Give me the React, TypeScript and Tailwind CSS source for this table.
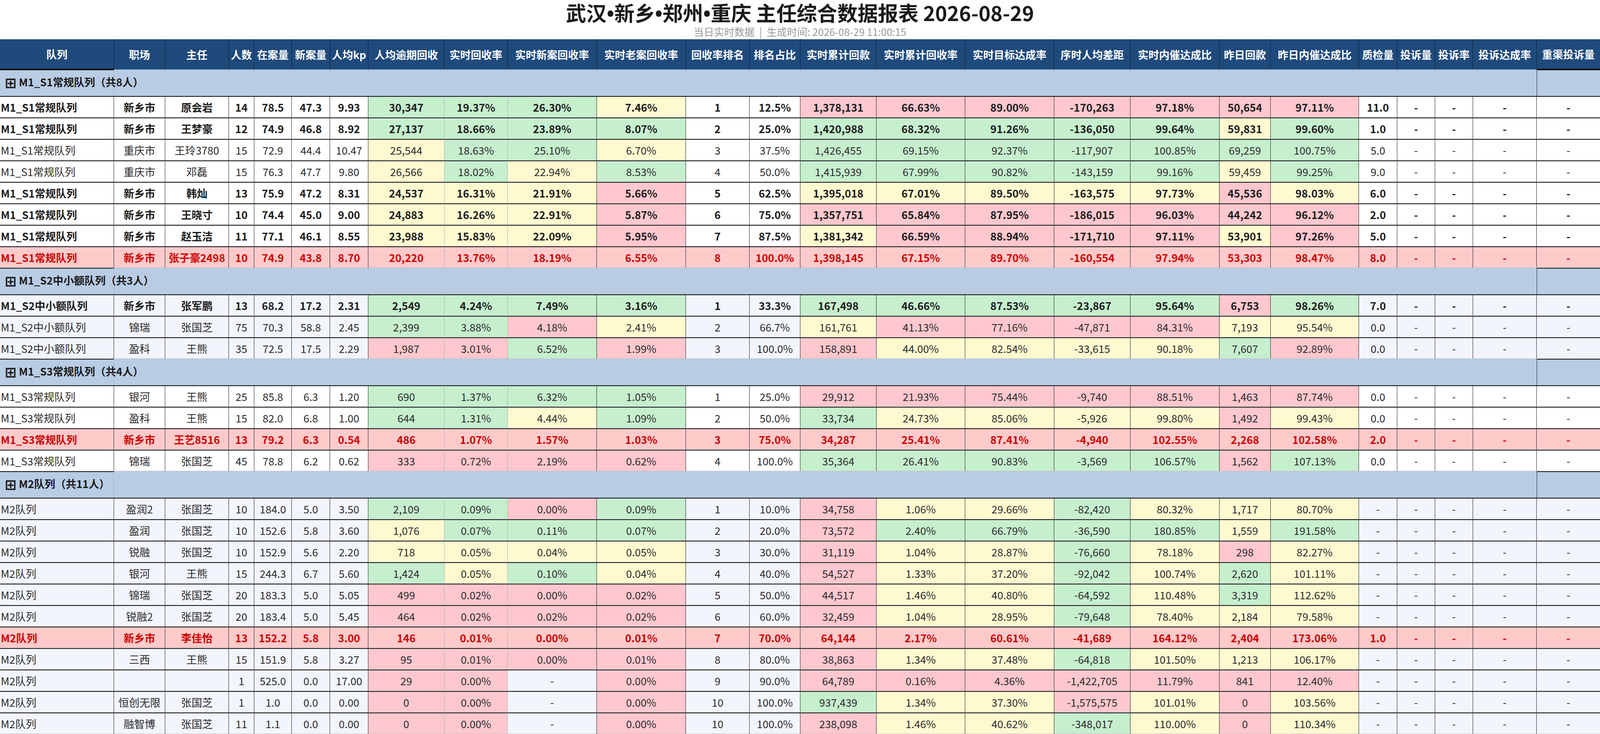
import * as React from 'react'

// -----------------------------------------------------------------------
// Data
// -----------------------------------------------------------------------

type Row = {
  team: string
  site: string
  lead: string
  /** 人数 .. 重渠投诉量, 22 values */
  vals: string[]
  /** fill codes for the 11 conditional columns: G / P / Y / . */
  fills: string
  bold?: boolean
  hl?: boolean
}

type Group = { title: string; light: boolean; rows: Row[] }

const WIDTHS = [292, 131, 163, 65, 96, 98, 98, 195, 162, 228, 228, 163, 130, 195, 227, 228, 195, 228, 131, 226, 98, 97, 97, 163, 162]

const HEADERS = [
  '队列', '职场', '主任', '人数', '在案量', '新案量', '人均kp', '人均逾期回收', '实时回收率',
  '实时新案回收率', '实时老案回收率', '回收率排名', '排名占比', '实时累计回款', '实时累计回收率',
  '实时目标达成率', '序时人均差距', '实时内催达成比', '昨日回款', '昨日内催达成比', '质检量',
  '投诉量', '投诉率', '投诉达成率', '重渠投诉量',
]

const COLORED = [7, 8, 9, 10, 13, 14, 15, 16, 17, 18, 19]

const FILL: Record<string, string> = {
  G: 'bg-[#c6efce]',
  P: 'bg-[#ffc7ce]',
  Y: 'bg-[#fff9d0]',
}

const r = (
  team: string,
  site: string,
  lead: string,
  vals: string,
  fills: string,
  opts: { bold?: boolean; hl?: boolean } = {},
): Row => ({ team, site, lead, vals: vals.split(' '), fills, ...opts })

const S1 = 'M1_S1常规队列'
const S2 = 'M1_S2中小额队列'
const S3 = 'M1_S3常规队列'
const M2 = 'M2队列'

const GROUPS: Group[] = [
  {
    title: 'M1_S1常规队列（共8人）',
    light: false,
    rows: [
      r(S1, '新乡市', '原会岩', '14 78.5 47.3 9.93 30,347 19.37% 26.30% 7.46% 1 12.5% 1,378,131 66.63% 89.00% -170,263 97.18% 50,654 97.11% 11.0 - - - -', 'GGGYPPPPPPP', { bold: true }),
      r(S1, '新乡市', '王梦豪', '12 74.9 46.8 8.92 27,137 18.66% 23.89% 8.07% 2 25.0% 1,420,988 68.32% 91.26% -136,050 99.64% 59,831 99.60% 1.0 - - - -', 'GGGGGGGGGYG', { bold: true }),
      r(S1, '重庆市', '王玲3780', '15 72.9 44.4 10.47 25,544 18.63% 25.10% 6.70% 3 37.5% 1,426,455 69.15% 92.37% -117,907 100.85% 69,259 100.75% 5.0 - - - -', 'YGGYGGGGGGG'),
      r(S1, '重庆市', '邓磊', '15 76.3 47.7 9.80 26,566 18.02% 22.94% 8.53% 4 50.0% 1,415,939 67.99% 90.82% -143,159 99.16% 59,459 99.25% 9.0 - - - -', 'YGYGGGGGGYG'),
      r(S1, '新乡市', '韩灿', '13 75.9 47.2 8.31 24,537 16.31% 21.91% 5.66% 5 62.5% 1,395,018 67.01% 89.50% -163,575 97.73% 45,536 98.03% 6.0 - - - -', 'YYYPYYYYYPY', { bold: true }),
      r(S1, '新乡市', '王晓寸', '10 74.4 45.0 9.00 24,883 16.26% 22.91% 5.87% 6 75.0% 1,357,751 65.84% 87.95% -186,015 96.03% 44,242 96.12% 2.0 - - - -', 'YYYPPPPPPPP', { bold: true }),
      r(S1, '新乡市', '赵玉洁', '11 77.1 46.1 8.55 23,988 15.83% 22.09% 5.95% 7 87.5% 1,381,342 66.59% 88.94% -171,710 97.11% 53,901 97.26% 5.0 - - - -', 'YYYPYPPPPYP', { bold: true }),
      r(S1, '新乡市', '张子豪2498', '10 74.9 43.8 8.70 20,220 13.76% 18.19% 6.55% 8 100.0% 1,398,145 67.15% 89.70% -160,554 97.94% 53,303 98.47% 8.0 - - - -', '...........', { hl: true }),
    ],
  },
  {
    title: 'M1_S2中小额队列（共3人）',
    light: true,
    rows: [
      r(S2, '新乡市', '张军鹏', '13 68.2 17.2 2.31 2,549 4.24% 7.49% 3.16% 1 33.3% 167,498 46.66% 87.53% -23,867 95.64% 6,753 98.26% 7.0 - - - -', 'GGGGGGGGGPG', { bold: true }),
      r(S2, '锦瑞', '张国芝', '75 70.3 58.8 2.45 2,399 3.88% 4.18% 2.41% 2 66.7% 161,761 41.13% 77.16% -47,871 84.31% 7,193 95.54% 0.0 - - - -', 'GGPYYPPPPYY'),
      r(S2, '盈科', '王熊', '35 72.5 17.5 2.29 1,987 3.01% 6.52% 1.99% 3 100.0% 158,891 44.00% 82.54% -33,615 90.18% 7,607 92.89% 0.0 - - - -', 'PPGPPYYYYGP'),
    ],
  },
  {
    title: 'M1_S3常规队列（共4人）',
    light: false,
    rows: [
      r(S3, '银河', '王熊', '25 85.8 6.3 1.20 690 1.37% 6.32% 1.05% 1 25.0% 29,912 21.93% 75.44% -9,740 88.51% 1,463 87.74% 0.0 - - - -', 'GGGGPPPPPPP'),
      r(S3, '盈科', '王熊', '15 82.0 6.8 1.00 644 1.31% 4.44% 1.09% 2 50.0% 33,734 24.73% 85.06% -5,926 99.80% 1,492 99.43% 0.0 - - - -', 'GGYGGYYYYPY'),
      r(S3, '新乡市', '王艺8516', '13 79.2 6.3 0.54 486 1.07% 1.57% 1.03% 3 75.0% 34,287 25.41% 87.41% -4,940 102.55% 2,268 102.58% 2.0 - - - -', '...........', { hl: true }),
      r(S3, '锦瑞', '张国芝', '45 78.8 6.2 0.62 333 0.72% 2.19% 0.62% 4 100.0% 35,364 26.41% 90.83% -3,569 106.57% 1,562 107.13% 0.0 - - - -', 'PPPPGGGGGPG'),
    ],
  },
  {
    title: 'M2队列（共11人）',
    light: true,
    rows: [
      r(M2, '盈润2', '张国芝', '10 184.0 5.0 3.50 2,109 0.09% 0.00% 0.09% 1 10.0% 34,758 1.06% 29.66% -82,420 80.32% 1,717 80.70% - - - - -', 'GGPGPYYGYYY'),
      r(M2, '盈润', '张国芝', '10 152.6 5.8 3.60 1,076 0.07% 0.11% 0.07% 2 20.0% 73,572 2.40% 66.79% -36,590 180.85% 1,559 191.58% - - - - -', 'YGGGPGGGGYG'),
      r(M2, '锐融', '张国芝', '10 152.9 5.6 2.20 718 0.05% 0.04% 0.05% 3 30.0% 31,119 1.04% 28.87% -76,660 78.18% 298 82.27% - - - - -', 'YYYYPYYGYPY'),
      r(M2, '银河', '王熊', '15 244.3 6.7 5.60 1,424 0.05% 0.10% 0.04% 4 40.0% 54,527 1.33% 37.20% -92,042 100.74% 2,620 101.11% - - - - -', 'GYGYPYYGYGY'),
      r(M2, '锦瑞', '张国芝', '20 183.3 5.0 5.05 499 0.02% 0.00% 0.02% 5 50.0% 44,517 1.46% 40.80% -64,592 110.48% 3,319 112.62% - - - - -', 'PPPPPYYGYGY'),
      r(M2, '锐融2', '张国芝', '20 183.4 5.0 5.45 464 0.02% 0.02% 0.02% 6 60.0% 32,459 1.04% 28.95% -79,648 78.40% 2,184 79.58% - - - - -', 'PPPPPYYGYYY'),
      r(M2, '新乡市', '李佳怡', '13 152.2 5.8 3.00 146 0.01% 0.00% 0.01% 7 70.0% 64,144 2.17% 60.61% -41,689 164.12% 2,404 173.06% 1.0 - - - -', '...........', { hl: true }),
      r(M2, '三西', '王熊', '15 151.9 5.8 3.27 95 0.01% 0.00% 0.01% 8 80.0% 38,863 1.34% 37.48% -64,818 101.50% 1,213 106.17% - - - - -', 'PPPPPYYGYYY'),
      r(M2, '', '', '1 525.0 0.0 17.00 29 0.00% - 0.00% 9 90.0% 64,789 0.16% 4.36% -1,422,705 11.79% 841 12.40% - - - - -', 'PP.PPPPPPPP'),
      r(M2, '恒创无限', '张国芝', '1 1.0 0.0 0.00 0 0.00% - 0.00% 10 100.0% 937,439 1.34% 37.30% -1,575,575 101.01% 0 103.56% - - - - -', 'PP.PGYYPYPY'),
      r(M2, '融智博', '张国芝', '11 1.1 0.0 0.00 0 0.00% - 0.00% 10 100.0% 238,098 1.46% 40.62% -348,017 110.00% 0 110.34% - - - - -', 'PP.PPYYGYPY'),
    ],
  },
]

// -----------------------------------------------------------------------
// Pieces
// -----------------------------------------------------------------------

const LAST = WIDTHS.length - 1

function rightBorder(i: number) {
  if (i === LAST) return ''
  if (i === 7 || i === 8) return 'border-r border-r-[#9fb3a2]'
  return 'border-r border-r-[#1e1e1e]'
}

function DataRow({ row, light }: { row: Row; light: boolean }) {
  const cells = [row.team, row.site, row.lead, ...row.vals]
  const base = row.hl ? 'bg-[#ffcaca]' : light ? 'bg-[#f2f5fc]' : 'bg-white'
  const text = row.hl
    ? 'font-bold text-[#cc0000]'
    : row.bold
      ? 'font-bold text-[#1c1c1c]'
      : 'font-normal text-[#2a2a2a]'

  return (
    <tr className="h-[55px]">
      {cells.map((v, i) => {
        const k = COLORED.indexOf(i)
        const code = k >= 0 ? row.fills[k] : '.'
        const bg = !row.hl && FILL[code] ? FILL[code] : base
        return (
          <td
            key={i}
            className={`border-t-2 border-t-[#1a1a1a] border-b border-b-[#c3c3c3] p-0 whitespace-nowrap ${rightBorder(i)} ${bg} ${text} ${
              i === 0 ? 'pl-[2px] text-left' : 'text-center'
            }`}
          >
            {v}
          </td>
        )
      })}
    </tr>
  )
}

function GroupRow({ title }: { title: string }) {
  return (
    <tr className="h-[68px] bg-[#b8cce4]">
      <td className="overflow-visible whitespace-nowrap border-t-2 border-t-[#1a1a1a] border-r border-r-[#9fb3cf] border-b border-b-[#9aa6b8] p-0 pl-[12px] text-left text-[27px] font-bold text-[#1a1a1a]">
        <span className="mr-[6px] inline-block align-[-4px] font-['DejaVu_Sans',sans-serif] text-[36px] leading-none">⊞</span>
        {title}
      </td>
      <td colSpan={23} className="border-b border-b-[#9aa6b8] p-0" />
      <td className="border-l border-l-[#1a1a1a] border-t-2 border-t-[#1a1a1a] border-b border-b-[#9aa6b8] p-0" />
    </tr>
  )
}

const Dot = () => <span className="font-['Noto_Sans',sans-serif]">•</span>

// -----------------------------------------------------------------------
// App
// -----------------------------------------------------------------------

export default function App() {
  return (
    <div className="w-full bg-white font-['Noto_Sans_CJK_SC','Noto_Sans',sans-serif]">
      {/* Title */}
      <div className="flex h-[100px] flex-col items-center">
        <h1 className="text-[52px] font-bold leading-[64px] text-[#1a1a1a]">
          武汉<Dot />新乡<Dot />郑州<Dot />重庆 主任综合数据报表 2026-08-29
        </h1>
        <p className="text-[26px] leading-[30px] text-[#9a9a9a]">
          当日实时数据<span className="mx-[12px]">|</span>生成时间: 2026-08-29 11:00:15
        </p>
      </div>

      {/* Table */}
      <table className="w-full table-fixed border-separate border-spacing-0 text-[27px] leading-none">
        <colgroup>
          {WIDTHS.map((w, i) => (
            <col key={i} style={{ width: w }} />
          ))}
        </colgroup>
        <thead>
          <tr className="h-[78px]">
            {HEADERS.map((h, i) => (
              <th
                key={h}
                className={`border-t border-t-[#a8a8a8] bg-[#1f4a7c] p-0 text-center text-[27px] font-bold whitespace-nowrap text-white ${
                  i === LAST ? '' : 'border-r border-r-[#0e1c2c]'
                } ${i === 0 || i === LAST ? 'border-b-2 border-b-[#111]' : ''}`}
              >
                {h}
              </th>
            ))}
          </tr>
        </thead>
        <tbody>
          {GROUPS.map((g) => (
            <React.Fragment key={g.title}>
              <GroupRow title={g.title} />
              {g.rows.map((row, j) => (
                <DataRow key={j} row={row} light={g.light} />
              ))}
            </React.Fragment>
          ))}
        </tbody>
      </table>
    </div>
  )
}
